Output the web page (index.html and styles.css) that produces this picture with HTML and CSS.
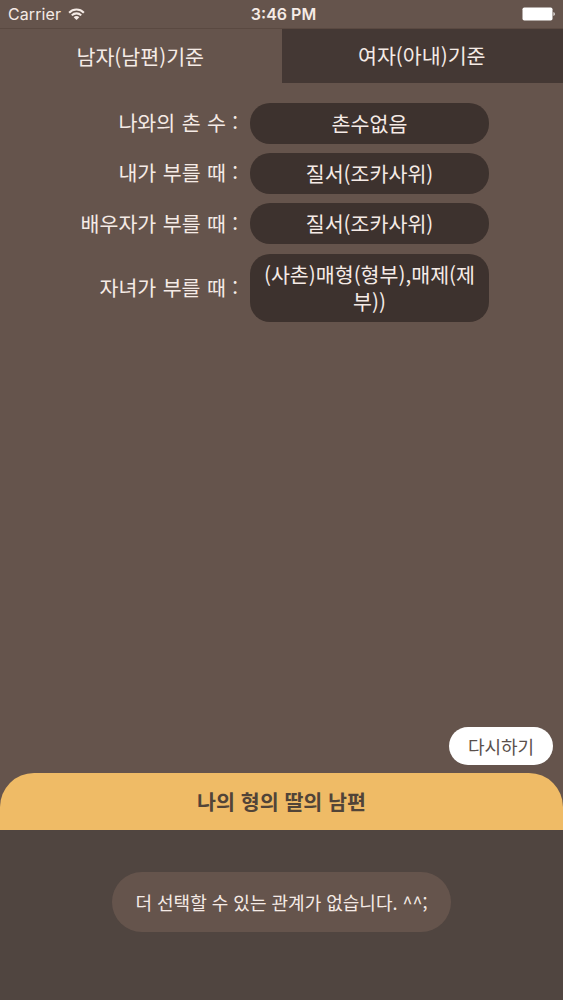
FILE: index.html
```html
<!DOCTYPE html>
<html lang="ko">
<head>
<meta charset="utf-8">
<title>촌수 계산</title>
<link rel="stylesheet" href="styles.css">
</head>
<body>
<div class="app">
  <header class="status">
    <div class="carrier"><span>Carrier</span>
      <svg class="wifi" viewBox="0 0 18 13" width="17" height="12.5"><g fill="none" stroke="#f5ebe6" stroke-width="2.2"><path d="M1.2 4.8a11 11 0 0 1 15.6 0"/><path d="M4 7.7a7 7 0 0 1 10 0"/></g><path d="M6 9.7a4.2 4.2 0 0 1 6 0L9 12.6z" fill="#f5ebe6"/></svg>
    </div>
    <div class="time">3:46 PM</div>
    <svg class="battery" viewBox="0 0 34 14" width="34" height="14"><rect x="0.5" y="0.5" width="30" height="13" rx="1.8" fill="#fff"/><path d="M31.5 5a2.2 2.2 0 0 1 0 4z" fill="#fff"/></svg>
  </header>
  <nav class="tabs">
    <div class="tab">남자(남편)기준</div>
    <div class="tab tab-dark">여자(아내)기준</div>
  </nav>
  <main class="results">
    <div class="row"><div class="label">나와의 촌 수 :</div><div class="value">촌수없음</div></div>
    <div class="row"><div class="label">내가 부를 때 :</div><div class="value">질서(조카사위)</div></div>
    <div class="row"><div class="label">배우자가 부를 때 :</div><div class="value">질서(조카사위)</div></div>
    <div class="row"><div class="label">자녀가 부를 때 :</div><div class="value value-tall">(사촌)매형(형부),매제(제<br>부))</div></div>
  </main>
  <div class="actions"><button class="reset">다시하기</button></div>
  <div class="relation">나의 형의 딸의 남편</div>
  <footer class="panel"><div class="notice">더 선택할 수 있는 관계가 없습니다. ^^;</div></footer>
</div>
</body>
</html>
```
FILE: styles.css
```css
* { box-sizing: border-box; }
body { margin: 0; }
.app {
  width: 563px;
  height: 1000px;
  display: flex;
  flex-direction: column;
  background: #65544c;
  color: #f5ebe6;
  font-family: "Noto Sans CJK KR", sans-serif;
  font-size: 20.6px;
  overflow: hidden;
  white-space: nowrap;
}
.status {
  height: 29px;
  padding: 0 7px 0 8px;
  display: grid;
  grid-template-columns: 1fr auto 1fr;
  align-items: center;
  border-bottom: 1px solid #5a4941;
  font-family: Inter, sans-serif;
  font-size: 16px;
}
.carrier { display: flex; align-items: center; gap: 7px; letter-spacing: 0.1px; }
.time { font-weight: 600; padding-left: 3px; }
.battery { justify-self: end; }
.tabs { display: flex; height: 54px; }
.tab {
  flex: 1;
  display: flex;
  justify-content: center;
  padding: 12px 1px 0 0;
  line-height: 30px;
}
.tab-dark { background: #443834; padding-top: 11px; }
.results {
  padding: 20px 74px 0 0;
  display: flex;
  flex-direction: column;
  gap: 9.6px;
}
.row { display: flex; align-items: center; justify-content: flex-end; }
.label {
  margin-right: 12px;
  padding-bottom: 2px;
  line-height: 28px;
  word-spacing: 0.6px;
}
.value {
  width: 239px;
  height: 40.6px;
  border-radius: 20px;
  background: #3d322e;
  text-align: center;
  line-height: 41px;
}
.value-tall { height: 68px; line-height: 27.5px; padding-top: 7px; }
.actions { margin-top: auto; display: flex; justify-content: flex-end; padding: 0 10px 8px 0; }
.reset {
  width: 104px;
  height: 38px;
  padding: 0;
  border: 0;
  border-radius: 19px;
  background: #fff;
  color: #5a504b;
  font: 18px/37px "Noto Sans CJK KR", sans-serif;
}
.relation {
  height: 57px;
  border-radius: 34px 34px 0 0;
  background: #efbb66;
  color: #514438;
  text-align: center;
  font-weight: 700;
  line-height: 57px;
}
.panel { height: 170px; padding-top: 42px; background: #504540; }
.notice {
  width: 339px;
  height: 60px;
  margin: 0 auto;
  border-radius: 30px;
  background: #65544c;
  text-align: center;
  font-size: 18px;
  line-height: 60px;
}
```
